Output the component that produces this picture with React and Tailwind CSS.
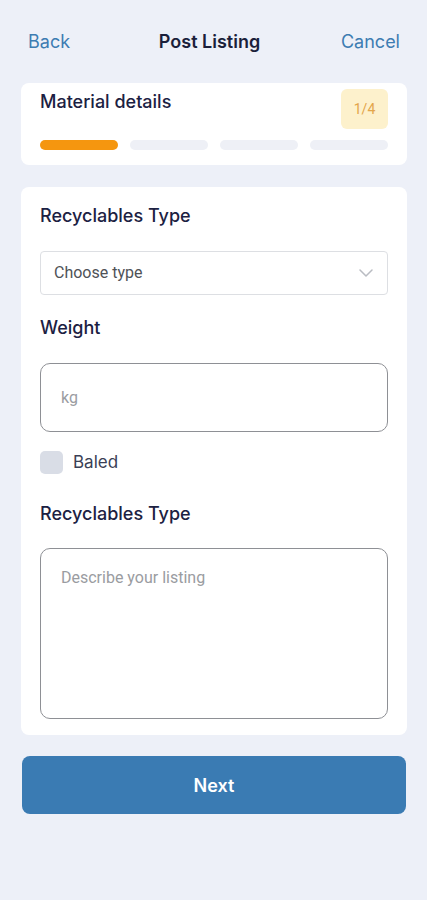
import React from 'react';

const steps = [true, false, false, false];

const Label = ({ children, className = '' }) => (
    <div className={`text-[18px] leading-[24px] font-medium text-[#1c2142] ${className}`}>{children}</div>
);

const App = () => {
    return (
        <div className="min-h-[900px] bg-[#edf0f8] font-['Inter','Liberation_Sans',sans-serif]">
            {/* header */}
            <div className="h-[83px] flex items-center justify-between pl-[28px] pr-[27px]">
                <span className="text-[18px] text-[#3d7cb2]">Back</span>
                <span className="text-[18px] font-semibold text-[#1b1f3b] ml-[8px]">Post Listing</span>
                <span className="text-[18px] text-[#3d7cb2]">Cancel</span>
            </div>

            {/* step card */}
            <div className="ml-[21px] mr-[20px] bg-white rounded-[8px] px-[19px] pt-[6px] pb-[15px]">
                <div className="flex items-start justify-between">
                    <div className="mt-[2px] text-[18px] leading-[22px] font-medium text-[#1c2142]">Material details</div>
                    <div className="w-[47px] h-[40px] rounded-[6px] bg-[#fdf1cc] flex items-center justify-center text-[14px] text-[#e3a54a] font-['Roboto',sans-serif]">1/4</div>
                </div>
                <div className="mt-[11px] grid grid-cols-4 gap-[12px]">
                    {steps.map((active, i) => (
                        <div key={i} className={`h-[10px] rounded-full ${active ? 'bg-[#f5960f]' : 'bg-[#eef0f6]'}`} />
                    ))}
                </div>
            </div>

            {/* form card */}
            <div className="ml-[21px] mr-[20px] mt-[22px] bg-white rounded-[8px] px-[19px] pt-[17px] pb-[16px]">
                <Label>Recyclables Type</Label>
                <div className="mt-[23px] h-[44px] rounded-[4px] border border-[#dddfe3] flex items-center justify-between pl-[13px] pr-[14px]">
                    <span className="text-[16px] text-[#4f5257] font-['Roboto',sans-serif]">Choose type</span>
                    <svg width="14" height="8" viewBox="0 0 14 8" fill="none">
                        <path d="M1 1l6 6 6-6" stroke="#b9bcc2" strokeWidth="1.5" strokeLinecap="round" strokeLinejoin="round" />
                    </svg>
                </div>

                <Label className="mt-[21px]">Weight</Label>
                <div className="mt-[23px] h-[69px] rounded-[10px] border border-[#8e9095] flex items-center pl-[20px]">
                    <span className="text-[16px] text-[#9a9ca1] font-['Roboto',sans-serif]">kg</span>
                </div>

                <div className="mt-[19px] h-[23px] flex items-center gap-[10px]">
                    <div className="w-[23px] h-[23px] rounded-[5px] bg-[#d9dde6]" />
                    <span className="text-[17px] text-[#3a3f56]">Baled</span>
                </div>

                <Label className="mt-[28px]">Recyclables Type</Label>
                <div className="mt-[22px] h-[171px] rounded-[10px] border border-[#8e9095] pl-[20px] pt-[16px]">
                    <span className="text-[16px] text-[#9a9ca1] font-['Roboto',sans-serif]">Describe your listing</span>
                </div>
            </div>

            {/* next */}
            <div className="ml-[22px] mr-[21px] mt-[21px] h-[58px] rounded-[8px] bg-[#3a7bb3] flex items-center justify-center">
                <span className="text-[18px] font-semibold text-white">Next</span>
            </div>
        </div>
    );
};

export default App;
